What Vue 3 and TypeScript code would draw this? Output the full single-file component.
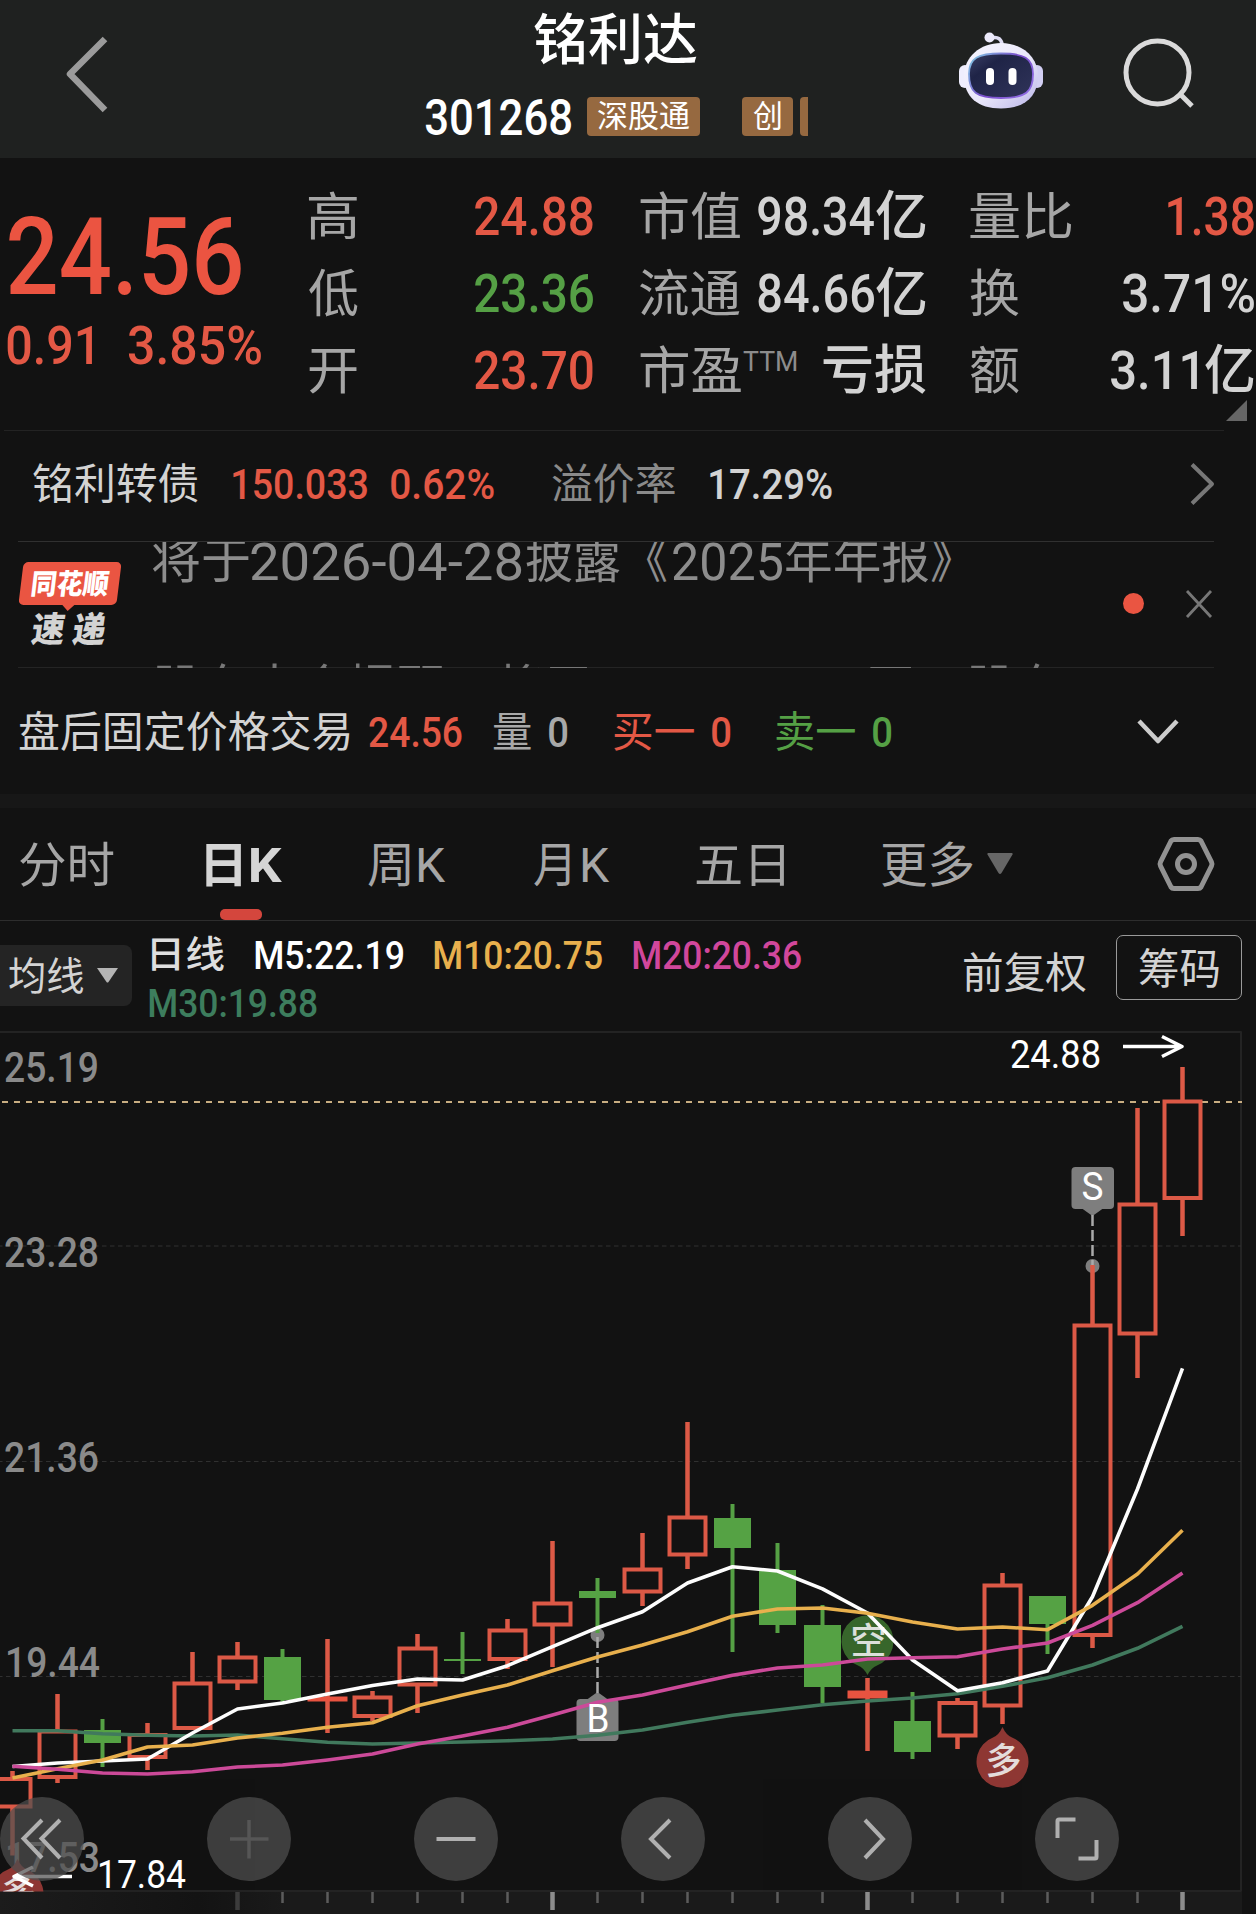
<script setup lang="ts">
import type { Directive } from 'vue'

const ctx = document.createElement('canvas').getContext('2d')!

/* Condenses a text run so that its visible glyphs span exactly the given width. */
const vInk: Directive<HTMLElement, number> = {
  mounted(el, { value }) {
    const cs = getComputedStyle(el)
    ctx.font = `${cs.fontWeight} ${cs.fontSize} ${cs.fontFamily}`
    const m = ctx.measureText((el.textContent ?? '').trim())
    const ratio = value / (m.actualBoundingBoxLeft + m.actualBoundingBoxRight)
    el.style.width = `${value}px`
    el.style.transform = `translate(${m.actualBoundingBoxLeft * ratio}px, 1px) scaleX(${ratio})`
  },
}

interface Run { t: string; w: number; c?: string }
interface Stat { label: Run; sup?: Run; value: Run[] }
const columns: { cls: string; items: Stat[] }[] = [
  {
    cls: 'ohl',
    items: [
      { label: { t: '高', w: 48 }, value: [{ t: '24.88', w: 118, c: 'red' }] },
      { label: { t: '低', w: 49 }, value: [{ t: '23.36', w: 118, c: 'green' }] },
      { label: { t: '开', w: 48 }, value: [{ t: '23.70', w: 118, c: 'red' }] },
    ],
  },
  {
    cls: 'cap',
    items: [
      { label: { t: '市值', w: 100 }, value: [{ t: '98.34', w: 116 }, { t: '亿', w: 50 }] },
      { label: { t: '流通', w: 100 }, value: [{ t: '84.66', w: 116 }, { t: '亿', w: 50 }] },
      { label: { t: '市盈', w: 101 }, sup: { t: 'TTM', w: 54 }, value: [{ t: '亏损', w: 103 }] },
    ],
  },
  {
    cls: 'vol',
    items: [
      { label: { t: '量比', w: 102 }, value: [{ t: '1.38', w: 86, c: 'red' }] },
      { label: { t: '换', w: 49 }, value: [{ t: '3.71%', w: 131 }] },
      { label: { t: '额', w: 49 }, value: [{ t: '3.11', w: 86 }, { t: '亿', w: 49 }] },
    ],
  },
]

const step = 45
const firstX = 12.5
const cx = (i: number) => firstX + i * step

type Kind = 'up' | 'down' | 'flat'
/* kind, high, body top, body bottom, low */
const raw: [Kind, number, number, number, number][] = [
  ['up', 1771, 1777, 1808.5, 1855.5], ['up', 1694, 1729.5, 1779, 1783],
  ['down', 1719, 1730, 1743, 1767], ['up', 1723, 1733, 1759, 1770],
  ['up', 1652, 1681.5, 1730, 1730], ['up', 1642, 1655.5, 1683.5, 1690],
  ['down', 1649, 1657, 1700, 1702], ['flat', 1639, 1696.5, 1701.5, 1733],
  ['up', 1691, 1695.5, 1718, 1721], ['up', 1634, 1646.5, 1686.5, 1713],
  ['down', 1632, 1659, 1661, 1674], ['up', 1619, 1628.5, 1661, 1669],
  ['up', 1541, 1601.5, 1626.5, 1667], ['down', 1578, 1591, 1598, 1633],
  ['up', 1533, 1567.5, 1593.5, 1606], ['up', 1422, 1515.5, 1556.5, 1569],
  ['down', 1504, 1518, 1548, 1652], ['down', 1543, 1570, 1625, 1633],
  ['down', 1605, 1625, 1687, 1703], ['flat', 1678, 1690.5, 1698.5, 1751],
  ['down', 1692, 1721, 1752, 1759], ['up', 1698, 1701, 1737.5, 1749],
  ['up', 1573, 1583.5, 1707.5, 1724], ['down', 1596, 1596, 1624, 1654],
  ['up', 1265, 1323.5, 1637, 1648], ['up', 1108, 1202.5, 1335.5, 1378],
  ['up', 1067, 1099.5, 1200, 1236],
]
const candles = raw.map(([kind, high, top, bottom, low], i) => ({ kind, high, top, bottom, low, x: cx(i) }))

const averages = [
  { color: '#41795d', y: [1730.7, 1730.7, 1733.7, 1735.3, 1736, 1735, 1738.7, 1742.3, 1744, 1743, 1742, 1740.7, 1739, 1735.3, 1730, 1722.3, 1715.3, 1710, 1704.7, 1701, 1698, 1693.7, 1686.3, 1677.7, 1665, 1648.3, 1626.3] },
  { color: '#fdfdfd', y: [1766.5, 1763, 1761, 1759, 1733, 1709, 1703, 1694, 1685.5, 1679, 1680, 1665.7, 1646.7, 1627.7, 1611.7, 1583, 1566.7, 1571, 1588.8, 1613, 1660, 1690.7, 1682.7, 1671, 1596.7, 1489, 1368.3] },
  { color: '#e8b04d', y: [1778, 1768.7, 1760, 1747, 1745, 1738, 1733.3, 1727.3, 1722.7, 1705.7, 1695, 1685, 1670.7, 1657, 1645, 1631.7, 1616.3, 1609, 1608, 1613.3, 1622, 1629, 1627, 1629.7, 1605.3, 1574, 1530.3] },
  { color: '#cc4a99', y: [1766.3, 1769.3, 1773, 1774, 1771.7, 1767, 1765, 1760, 1754, 1744, 1736, 1727.3, 1715, 1702.3, 1695, 1685, 1675.3, 1668, 1665, 1659, 1657.7, 1656.7, 1649, 1643, 1625.3, 1602.7, 1573] },
].map((l) => ({ color: l.color, points: l.y.map((y, i) => `${cx(i)},${y}`).join(' ') }))

const axis = [
  { t: '25.19', y: 1082, x: 4 }, { t: '23.28', y: 1267, x: 4 }, { t: '21.36', y: 1472, x: 4 },
  { t: '19.44', y: 1677, x: 5 }, { t: '17.53', y: 1871.5, x: 5 },
]
const grid = [1246, 1461.5, 1676.5]
const ticks = Array.from({ length: 22 }, (_, k) => k + 5).map((i) => ({ x: cx(i), major: i % 7 === 5, first: i === 5 }))

const controls = [
  { name: 'fast-back', d: 'M42 23 23.5 41.5 42 61M60 23 41.5 41.5 60 61' },
  { name: 'zoom-in', d: 'M23 42H61.500M42 23V61.500' },
  { name: 'zoom-out', d: 'M22.500 42H61.500' },
  { name: 'prev', d: 'M49 23 30 42 49 61' },
  { name: 'next', d: 'M37 23 55 42 37 61' },
  { name: 'expand', d: 'M22.500 41V24Q22.500 22.500 24 22.500H40.500M61.500 43V60Q61.500 61.500 60 61.500H43.500' },
]
</script>

<template>
  <main class="app">
    <header class="top">
      <svg class="back" width="50" height="80" viewBox="0 0 50 80"><path d="M43 5 8 40 43 76" /></svg>
      <div class="name"><span v-ink="163">铭利达</span></div>
      <div class="codeline">
        <b v-ink="146" class="code">301268</b>
        <span class="badge main"><span v-ink="92">深股通</span></span>
        <span class="badge second"><span v-ink="28">创</span></span>
        <span class="badge cut"></span>
      </div>
      <svg class="robot" width="86" height="80" viewBox="0 0 86 80">
        <defs>
          <linearGradient id="shell" x1="0" y1="0" x2="1" y2="1">
            <stop offset="0" stop-color="#f6f5ff" /><stop offset=".55" stop-color="#e9e7fa" /><stop offset="1" stop-color="#b9b5e8" />
          </linearGradient>
          <linearGradient id="rim" x1="0" y1="0" x2="1" y2=".6">
            <stop offset="0" stop-color="#80cfe4" /><stop offset=".6" stop-color="#7a4ccc" /><stop offset="1" stop-color="#8c68e0" />
          </linearGradient>
          <linearGradient id="face" x1="0" y1="0" x2="1" y2="1">
            <stop offset="0" stop-color="#3b4067" /><stop offset=".3" stop-color="#1f2447" /><stop offset="1" stop-color="#30345a" />
          </linearGradient>
        </defs>
        <path d="M33 7C40 5 44 8 44.500 16" fill="none" stroke="#dedcf3" stroke-width="3.500" />
        <circle cx="31.500" cy="6.500" r="5" fill="#eceafb" />
        <rect x="1" y="34" width="12" height="23" rx="6" fill="#eeedfd" /><rect x="73" y="34" width="12" height="23" rx="6" fill="#d2cff3" />
        <path d="M43 12C64 12 80 26 80 45C80 66 66 77.500 43 77.500C20 77.500 6 66 6 45C6 26 22 12 43 12Z" fill="url(#shell)" />
        <path d="M43 22.500C66 22.500 75 27 75 43C75 61 68 67 43 67C18 67 11 61 11 43C11 27 20 22.500 43 22.500Z" fill="url(#face)" stroke="url(#rim)" stroke-width="1.800" />
        <rect x="28" y="37" width="8" height="17" rx="4" fill="#fff" /><rect x="50.500" y="37" width="8" height="17" rx="4" fill="#fff" />
      </svg>
      <svg class="search" width="76" height="76" viewBox="0 0 76 76"><circle cx="36.500" cy="36.500" r="31.500" /><path d="M59 58 71 70" /></svg>
    </header>

    <section class="quote">
      <div class="price red">
        <b v-ink="232" class="last">24.56</b>
        <div class="change"><span v-ink="85">0.91</span><span v-ink="132">3.85%</span></div>
      </div>
      <div v-for="col in columns" :key="col.cls" class="stats" :class="col.cls">
        <div v-for="s in col.items" :key="s.label.t" class="stat">
          <span v-ink="s.label.w" class="label">{{ s.label.t }}</span>
          <span v-if="s.sup" v-ink="s.sup.w" class="sup">{{ s.sup.t }}</span>
          <span class="value" :class="{ wide: s.value[0].t === '3.11' }">
            <span v-for="r in s.value" :key="r.t" v-ink="r.w" :class="r.c">{{ r.t }}</span>
          </span>
        </div>
      </div>
      <i class="corner"></i>
    </section>

    <section class="bond">
      <span v-ink="165" class="bname">铭利转债</span>
      <span v-ink="134" class="red m">150.033</span>
      <span v-ink="103" class="red m pct">0.62%</span>
      <span v-ink="123" class="dim">溢价率</span>
      <span v-ink="122" class="m rate">17.29%</span>
      <svg width="32" height="48" viewBox="0 0 32 48"><path d="M6 4.500 26 24 6 43.500" /></svg>
    </section>

    <section class="news">
      <div class="logo">
        <div class="bubble"><b v-ink="77">同花顺</b></div>
        <b class="sub"><span v-ink="33">速</span><span v-ink="33">递</span></b>
      </div>
      <div class="feed">
        <p>
          <span v-ink="97">将于</span><span v-ink="271" class="n">2026-04-28</span><span v-ink="94">披露</span>
          <span v-ink="21" class="open">《</span><span v-ink="109" class="n year">2025</span><span v-ink="143">年年报</span><span v-ink="21">》</span>
        </p>
        <p class="upcoming"><span>股东大会提醒：将于</span><span class="k1">开</span><span class="k2">股东</span></p>
      </div>
      <i class="dot"></i>
      <svg class="close" width="32" height="32" viewBox="0 0 32 32"><path d="M4 3 28 29M28 3 4 29" /></svg>
    </section>

    <section class="after">
      <span v-ink="331">盘后固定价格交易</span>
      <span v-ink="93" class="red m g19">24.56</span>
      <span v-ink="38" class="soft g30">量</span><span v-ink="18" class="soft m g18">0</span>
      <span v-ink="80" class="red g46">买一</span><span v-ink="18" class="red m g18">0</span>
      <span v-ink="79" class="green g46">卖一</span><span v-ink="18" class="green m g18">0</span>
      <svg width="48" height="32" viewBox="0 0 48 32"><path d="M5 5 24 25 43 5" /></svg>
    </section>

    <nav class="tabs">
      <span class="t1"><span v-ink="94">分时</span></span>
      <span class="t2 on"><span v-ink="35">日</span><span v-ink="31">K</span></span>
      <span class="t3"><span v-ink="42">周</span><span v-ink="28">K</span></span>
      <span class="t4"><span v-ink="36">月</span><span v-ink="28">K</span></span>
      <span class="t5"><span v-ink="88">五日</span></span>
      <span class="t6"><span v-ink="91">更多</span></span>
      <svg class="tri" width="26" height="22" viewBox="0 0 26 22"><path d="M1 0H25Q26 0 25.500 1.500L14.500 20Q13 22 11.500 20L.5 1.500Q0 0 1 0Z" /></svg>
      <svg class="gear" width="60" height="58" viewBox="0 0 60 58"><path d="M18 4.500H42Q44 4.500 45 6L55.500 27Q56.500 29 55.500 31L45 52Q44 53.500 42 53.500H18Q16 53.500 15 52L4.500 31Q3.500 29 4.500 27L15 6Q16 4.500 18 4.500Z" /><circle cx="30" cy="29" r="8.500" /></svg>
    </nav>

    <section class="ind">
      <div class="pick"><span v-ink="75">均线</span><svg width="21" height="15" viewBox="0 0 21 15"><path d="M0 0H21L11.500 14Q10.500 15 9.500 14Z" /></svg></div>
      <div class="legend">
        <div class="line">
          <span v-ink="72" class="day">日线</span>
          <span v-ink="148" class="m5">M5:22.19</span><span v-ink="168" class="m10">M10:20.75</span><span v-ink="168" class="m20">M20:20.36</span>
        </div>
        <div class="line"><span v-ink="168" class="m30">M30:19.88</span></div>
      </div>
      <span v-ink="122" class="adj">前复权</span>
      <button class="chips"><span v-ink="80">筹码</span></button>
    </section>

    <section class="chart">
      <svg class="plot" width="1256" height="883" viewBox="0 1031 1256 883">
        <defs><clipPath id="area"><rect x="0" y="1031" width="1256" height="860.500" /></clipPath>
          <linearGradient id="strip"><stop offset="0" stop-color="#1c1c1c" /><stop offset=".16" stop-color="#131313" /><stop offset=".23" stop-color="#1a1a1a" /></linearGradient>
        </defs>
        <rect x="0" y="1892" width="1242" height="22" fill="url(#strip)" />
        <path d="M0 1032H1241V1891H0" fill="none" stroke="#232323" stroke-width="2" />
        <path v-for="y in grid" :key="y" :d="`M-2 ${y}H1241`" stroke="#303030" stroke-width="1.200" stroke-dasharray="4.500 3.500" />
        <path d="M2 1102H1242" stroke="#c9ae82" stroke-width="2" stroke-dasharray="6 6" />
        <g class="axis">
          <text v-for="a in axis" :key="a.t" :x="a.x" :y="a.y" textLength="95" lengthAdjust="spacingAndGlyphs">{{ a.t }}</text>
        </g>

        <g fill="#7e7e7e">
          <circle cx="597.500" cy="1635" r="7" /><circle cx="1092.500" cy="1266" r="7" />
          <rect x="576.500" y="1699" width="42" height="42" rx="4" /><path d="M587 1699.500 597.500 1692 608 1699.500Z" />
          <rect x="1071.500" y="1167" width="42.500" height="42" rx="4" /><path d="M1082 1208.500 1092.500 1216 1103 1208.500Z" />
        </g>
        <path d="M597.500 1637V1693M1092.500 1215V1265" stroke="#aaa" stroke-width="2.500" stroke-dasharray="11 4" />
        <g clip-path="url(#area)">
          <path d="M867.500 1675Q864 1668 858 1665.500A26 26 0 1 1 877 1665.500Q871 1668 867.500 1675Z" fill="#37662b" />
          <path d="M1002.500 1727Q999 1735 993 1737.500A26 26 0 1 0 1012 1737.500Q1006 1735 1002.500 1727Z" fill="#8e3733" />
          <path d="M17.500 1859Q14 1867 8 1869.500A26 26 0 1 0 27 1869.500Q21 1867 17.500 1859Z" fill="#8e3733" />
          <g class="mark">
            <text x="868.500" y="1654">空</text><text x="1003.500" y="1774">多</text><text x="18.500" y="1906">多</text>
          </g>
        </g>

        <g v-for="c in candles" :key="c.x">
          <template v-if="c.kind === 'down'">
            <path :d="`M${c.x} ${c.high}V${c.low}`" stroke="#55a044" stroke-width="4" />
            <rect :x="c.x - 18.5" :y="c.top" width="37" :height="c.bottom - c.top" fill="#55a244" />
          </template>
          <template v-else-if="c.kind === 'flat'">
            <path :d="`M${c.x} ${c.high}V${c.low}`" stroke="#dc5946" stroke-width="4.500" />
            <rect :x="c.x - 20" :y="c.top" width="40" :height="c.bottom - c.top" fill="#e85340" />
          </template>
          <template v-else>
            <path :d="`M${c.x} ${c.high}V${c.top + 2}M${c.x} ${c.bottom - 2}V${c.low}`" stroke="#dc5946" stroke-width="4.500" />
            <rect :x="c.x - 18" :y="c.top + 2" width="36" :height="c.bottom - c.top - 4" fill="none" stroke="#dc5946" stroke-width="4" />
          </template>
        </g>

        <polyline v-for="a in averages" :key="a.color" :points="a.points" fill="none" :stroke="a.color" stroke-width="3.600" stroke-linejoin="round" />

        <g class="flag"><text x="598" y="1732" textLength="23" lengthAdjust="spacingAndGlyphs">B</text><text x="1092.500" y="1200" textLength="22" lengthAdjust="spacingAndGlyphs">S</text></g>
        <g class="extreme">
          <text x="1010" y="1067.500" textLength="91" lengthAdjust="spacingAndGlyphs">24.88</text>
          <text x="97" y="1887.500" textLength="89" lengthAdjust="spacingAndGlyphs">17.84</text>
          <path d="M1123 1046.500H1181M1162 1036.500 1182 1046.500 1162 1056.500M72 1876.500H14M33 1867 14 1876.500 33 1886" />
        </g>
        <path v-for="t in ticks" :key="t.x" :d="`M${t.x} 1892v${t.major ? 18 : 11}`" :stroke="t.first ? '#3c3c3c' : t.major ? '#8c8c8c' : '#5c5c5c'" :stroke-width="t.major ? 4.5 : 2.5" />
      </svg>
      <div class="controls">
        <button v-for="c in controls" :key="c.name" :class="c.name"><svg width="84" height="84" viewBox="0 0 84 84"><path :d="c.d" /></svg></button>
      </div>
    </section>
  </main>
</template>

<style>
body { margin: 0; background: #121212; }
</style>

<style scoped>
.app { width: 1256px; height: 1914px; overflow: hidden; background: #121212; color: #d3d3d3; font-family: Roboto, "Noto Sans CJK SC", sans-serif; }
.app * { box-sizing: border-box; }
.app span, .app b { display: block; white-space: nowrap; transform-origin: 0 50%; flex: none; }
svg { display: block; flex: none; }
svg path, svg circle { stroke-linejoin: round; }
button { border: 0; padding: 0; margin: 0; background: none; font: inherit; color: inherit; }
p { margin: 0; }
.app .red { color: #e35845; }
.app .green { color: #55a045; }
.app .dim { color: #8a8a8a; }
.app .soft { color: #a8a8a8; }
.m { font-weight: 500; }

.top { height: 158px; background: #1f2120; display: grid; grid-template-columns: 425px 518px 142px 1fr; grid-template-rows: 78px 80px; }
.back { grid-row: 1 / 3; margin: 34px 0 0 62px; fill: none; stroke: #9b9b9b; stroke-width: 6.5; }
.name { grid-column: 2; grid-row: 1; font-size: 55px; line-height: 78px; font-weight: 500; color: #fff; margin-left: 109px; }
.codeline { grid-column: 2; grid-row: 2; display: flex; align-items: center; height: 78px; color: #fff; }
.code { font-size: 50px; font-weight: 500; }
.badge { height: 39px; border-radius: 4px; background: #966940; color: #fff; font-size: 31px; line-height: 37px; padding: 0 11px; margin-top: -2px; }
.badge.main { width: 113px; margin-left: 16px; }
.badge.second { width: 51px; margin-left: 42px; }
.badge.cut { width: 8px; padding: 0; margin-left: 7px; border-radius: 4px 0 0 4px; }
.robot { grid-column: 3; grid-row: 1 / 3; margin: 31px 0 0 15px; }
.search { grid-column: 4; grid-row: 1 / 3; margin: 36px 0 0 36px; fill: none; stroke: #dadada; stroke-width: 5; }

.quote { height: 272px; position: relative; display: flex; }
.quote::after { content: ""; position: absolute; left: 4px; right: 32px; bottom: -1px; height: 1px; background: #232323; }
.price { width: 309px; padding: 37px 0 0 9px; }
.last { font-size: 107px; line-height: 124px; font-weight: 500; color: #eb5441; }
.change { display: flex; gap: 37px; margin-left: -2px; font-size: 53px; line-height: 52px; height: 52px; font-weight: 500; }
.stats { padding-top: 20px; }
.ohl { width: 284px; margin-right: 47px; }
.cap { width: 286px; margin-right: 44px; }
.vol { width: 284px; }
.stat { height: 77px; display: flex; align-items: center; font-size: 53px; line-height: 77px; }
.label { font-size: 51px; color: #a6a6a6; }
.sup { font-size: 28px; color: #8c8c8c; line-height: 28px; margin: -20px 0 0 2px; }
.value { display: flex !important; gap: 2px; margin-left: auto; font-weight: 500; }
.value.wide { gap: 8px; }
.corner { position: absolute; right: 9px; bottom: 9px; border-left: 21px solid transparent; border-bottom: 21px solid #666; }

.bond { height: 111px; padding: 0 38px 3px 33px; display: flex; align-items: center; font-size: 42.500px; line-height: 60px; }
.bond .bname { margin-right: 35px; }
.bond .pct { margin-left: 24px; margin-right: 58px; }
.bond .rate { margin-left: 35px; }
.bond svg { margin-left: auto; margin-top: -1px; fill: none; stroke: #777; stroke-width: 4; }

.news { height: 127px; margin: 0 42px 0 18px; position: relative; border-top: 1px solid #303030; border-bottom: 1px solid #242424; display: flex; }
.logo { width: 134px; padding: 20px 0 0 0; flex: none; }
.bubble { width: 98px; height: 43px; margin-left: 3px; border-radius: 5px; background: #ea5542; transform: skewX(-7deg); position: relative; padding-left: 11px; color: #fff; }
.bubble::after { content: ""; position: absolute; left: 43px; top: 42px; border: 7px solid transparent; border-top-color: #ea5542; border-bottom: 0; }
.bubble b { font-size: 28px; line-height: 44px; font-weight: 900; }
.sub { display: flex !important; gap: 8px; font-size: 35px; line-height: 48px; font-weight: 900; margin: 1px 0 0 14px; transform: skewX(-8deg); }
.feed { width: 940px; height: 126px; overflow: hidden; flex: none; }
.feed p { display: flex; height: 58px; margin-top: -10px; font-size: 49px; line-height: 58px; gap: 2px; color: #8d8d8d; }
.feed .n { font-size: 51.500px; line-height: 59px; }
.feed .open { margin-left: 24px; }
.feed .n.year { margin-left: 4px; }
.feed .n + span { margin-left: 2px; }
.feed p.upcoming { margin-top: 70px; gap: 0; color: #777; }
.upcoming .k1 { margin-left: 273px; }
.upcoming .k2 { margin-left: 51px; }
.dot { flex: none; width: 21px; height: 21px; border-radius: 50%; background: #ea5542; margin: 51px 0 0 31px; }
.close { margin: 46px 0 0 39px; fill: none; stroke: #777; stroke-width: 2.800; }

.after { height: 126px; padding: 2px 74px 0 19px; display: flex; align-items: center; font-size: 42.500px; line-height: 60px; }
.g18 { margin-left: 18px; }
.g19 { margin-left: 19px; }
.g30 { margin-left: 31px; }
.g46 { margin-left: 46.500px; }
.after svg { margin-left: auto; fill: none; stroke: #ccc; stroke-width: 4.500; }

.tabs { height: 127px; border-top: 14px solid #171717; border-bottom: 1px solid #2d2d2d; padding-left: 20px; display: flex; font-size: 48px; line-height: 114px; color: #a6a6a6; }
.tabs > span { display: flex; gap: 8px; height: 112px; }
.tabs .t2 { margin-left: 92px; gap: 10px; }
.tabs .t3 { margin-left: 86px; }
.tabs .t4 { margin-left: 88px; gap: 12px; }
.tabs .t5 { margin-left: 86px; }
.tabs .t6 { margin-left: 98px; }
.tabs .on { color: #d5d5d5; font-weight: 700; position: relative; }
.on::after { content: ""; position: absolute; left: 14px; bottom: 0; width: 42px; height: 11px; border-radius: 5px; background: #d4463d; }
.tri { margin: 45px 0 0 14px; fill: #666; }
.gear { margin: 27px 0 0 143px; fill: none; stroke: #929292; stroke-width: 5; }

.ind { height: 110px; display: flex; align-items: flex-start; }
.pick { width: 132px; height: 61px; margin-top: 24px; padding-left: 9px; border-radius: 0 8px 8px 0; background: #242424; display: flex; align-items: center; gap: 13px; font-size: 38.500px; line-height: 61px; }
.pick svg { fill: #b4b4b4; margin-top: -1px; }
.legend { width: 830px; padding: 10px 0 0 17px; }
.line { display: flex; height: 48px; font-size: 39px; line-height: 48px; font-weight: 500; }
.line .day { margin-left: 3px; font-size: 37px; color: #dedede; }
.m5 { margin-left: 31px; color: #fff; }
.m10 { margin-left: 31px; color: #e8b04d; }
.m20 { margin-left: 31px; color: #d1479c; }
.m30 { color: #3d7d5d; }
.adj { font-size: 42px; line-height: 60px; margin: 22px 0 0 2px; }
.chips { width: 126px; height: 65px; margin: 14px 0 0 30px; border: 1px solid #9a9a9a; border-radius: 7px; padding-left: 22px; font-size: 42px; line-height: 65px; text-align: left; }

.chart { position: relative; height: 883px; }
.axis { font-size: 42px; font-weight: 500; fill: #8a8a8a; }
.mark { font-size: 36px; fill: #eee; text-anchor: middle; opacity: .9; font-weight: 500; }
.flag { font-size: 38px; fill: #fff; text-anchor: middle; }
.extreme { font-size: 38px; fill: #fff; }
.extreme path { stroke: #fff; stroke-width: 3.500; fill: none; }
.controls { position: absolute; left: 0; top: 766px; width: 1119px; display: flex; justify-content: space-between; }
.controls button { width: 84px; height: 84px; border-radius: 50%; background: rgba(79, 79, 79, .72); }
.controls path { fill: none; stroke: #b0b0b0; stroke-width: 4; stroke-linejoin: miter; }
.controls .zoom-in path { stroke: #565656; stroke-width: 3.500; }
</style>
